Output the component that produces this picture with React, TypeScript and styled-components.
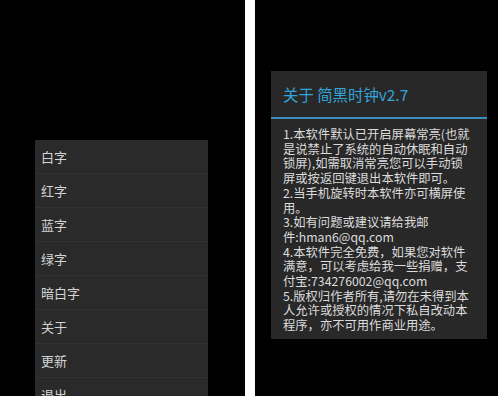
import React from "react";
import styled, { createGlobalStyle } from "styled-components";

const Global = createGlobalStyle`
  html, body { margin: 0; padding: 0; background: #000; }
  body { font-family: "Noto Sans CJK SC", "Noto Sans", sans-serif; }
`;

const Screen = styled.div`
  display: flex;
  width: 498px;
  height: 396px;
  overflow: hidden;
  background: #fff;
`;

const Phone = styled.div<{ $w: number }>`
  width: ${(p) => p.$w}px;
  height: 396px;
  background: #000;
  flex: none;
  display: flex;
  flex-direction: column;
  overflow: hidden;
`;

const Divider = styled.div`
  width: 10px;
  flex: none;
  background: #fff;
`;

const Menu = styled.ul`
  list-style: none;
  margin: 140px 0 0 35px;
  padding: 0;
  width: 173px;
  background: #2a2a2a;
`;

const MenuItem = styled.li`
  height: 33px;
  border-bottom: 1px solid #323232;
  display: flex;
  align-items: center;
  padding-left: 6px;
  font-size: 13px;
  color: #d4d4d4;
`;

const Dialog = styled.div`
  margin: 71px 0 0 16px;
  width: 216px;
  background: #282828;
`;

const Title = styled.div`
  height: 46px;
  display: flex;
  align-items: center;
  padding: 0 12px;
  font-size: 15.4px;
  color: #33a4d8;
  border-bottom: 2px solid #3a8fbd;
  white-space: nowrap;
`;

const Body = styled.div`
  padding: 8px 0 6px 12px;
  font-size: 12.3px;
  line-height: 14.7px;
  color: #dcdcdc;
`;

const Line = styled.div`
  white-space: nowrap;
`;

const items = ["白字", "红字", "蓝字", "绿字", "暗白字", "关于", "更新", "退出"];

const lines = [
  "1.本软件默认已开启屏幕常亮(也就",
  "是说禁止了系统的自动休眠和自动",
  "锁屏),如需取消常亮您可以手动锁",
  "屏或按返回键退出本软件即可。",
  "2.当手机旋转时本软件亦可横屏使",
  "用。",
  "3.如有问题或建议请给我邮",
  "件:hman6@qq.com",
  "4.本软件完全免费，如果您对软件",
  "满意，可以考虑给我一些捐赠，支",
  "付宝:734276002@qq.com",
  "5.版权归作者所有,请勿在未得到本",
  "人允许或授权的情况下私自改动本",
  "程序，亦不可用作商业用途。",
];

export default function App() {
  return (
    <>
      <Global />
      <Screen>
        <Phone $w={245}>
          <Menu>
            {items.map((t) => (
              <MenuItem key={t}>{t}</MenuItem>
            ))}
          </Menu>
        </Phone>
        <Divider />
        <Phone $w={243}>
          <Dialog>
            <Title>关于 简黑时钟v2.7</Title>
            <Body>
              {lines.map((l, i) => (
                <Line key={i}>{l}</Line>
              ))}
            </Body>
          </Dialog>
        </Phone>
      </Screen>
    </>
  );
}
